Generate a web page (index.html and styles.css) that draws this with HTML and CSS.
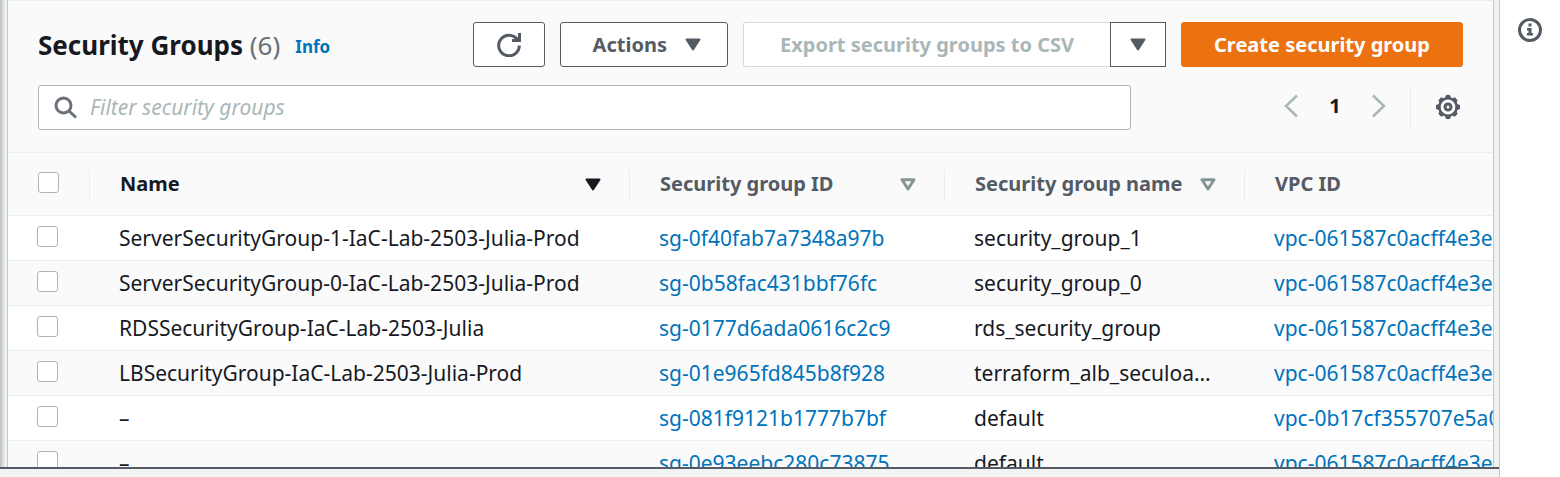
FILE: index.html
```html
<!DOCTYPE html>
<html lang="en">
<head>
<meta charset="utf-8">
<title>Security Groups</title>
<link rel="stylesheet" href="styles.css">
</head>
<body>
<div class="app">
  <div class="workspace">
    <main class="panel">
      <header class="toolbar">
        <div class="toolbar-row">
          <h1 class="title">Security Groups <span class="count">(6)</span></h1>
          <a class="info-link" href="#">Info</a>
          <div class="actions">
            <button class="btn btn-icon" type="button" aria-label="Refresh">
              <svg width="24" height="24" viewBox="0 0 24 24" fill="none" stroke="currentColor" stroke-width="3"><path d="M22.300 12.500A10.300 10.300 0 1 1 18.500 4.500L21 7"/><path d="M22.500 0v7.500H15"/><path d="M18 4.500h4v3h-4z" fill="currentColor" stroke="none"/></svg>
            </button>
            <button class="btn" type="button">Actions
              <svg class="caret" width="16" height="13" viewBox="0 0 16 13"><path d="M1.500 1.500h13L8 11.500z" fill="currentColor" stroke="currentColor" stroke-width="2" stroke-linejoin="round"/></svg>
            </button>
            <div class="btn-group">
              <button class="btn btn-export" type="button" disabled>Export security groups to CSV</button>
              <button class="btn btn-split" type="button" aria-label="Export options">
                <svg width="16" height="13" viewBox="0 0 16 13"><path d="M1.500 1.500h13L8 11.500z" fill="currentColor" stroke="currentColor" stroke-width="2" stroke-linejoin="round"/></svg>
              </button>
            </div>
            <button class="btn btn-primary" type="button">Create security group</button>
          </div>
        </div>
        <div class="toolbar-row">
          <label class="search">
            <svg width="24" height="24" viewBox="0 0 24 24" fill="none" stroke="currentColor" stroke-width="3"><circle cx="9.500" cy="9.500" r="7.500"/><path d="M14.500 14.500l7.500 7"/></svg>
            <input class="search-input" type="text" placeholder="Filter security groups" aria-label="Filter security groups">
          </label>
          <nav class="pager" aria-label="Pagination">
            <button class="pager-btn" type="button" aria-label="Previous page"><svg width="14" height="24" viewBox="0 0 14 24" fill="none" stroke="currentColor" stroke-width="2.500"><path d="M13 1.500L2 12l11 10.500"/></svg></button>
            <button class="pager-btn current" type="button">1</button>
            <button class="pager-btn" type="button" aria-label="Next page"><svg width="14" height="24" viewBox="0 0 14 24" fill="none" stroke="currentColor" stroke-width="2.500"><path d="M1 1.500L12 12 1 22.500"/></svg></button>
          </nav>
          <button class="settings" type="button" aria-label="Preferences">
            <svg width="24" height="24" viewBox="0 0 24 24"><g fill="none" stroke="currentColor"><circle cx="12" cy="12" r="8.700" stroke-width="2.600"/><circle cx="12" cy="12" r="3" stroke-width="3"/></g><path fill="currentColor" d="M9 3l1-3h4l1 3zM9 21l1 3h4l1-3zM3 9l-3 1v4l3 1zM21 9l3 1v4l-3 1zM4 8.500L2.300 5.200l2.900-2.900L8.500 4zM20 8.500l1.700-3.300-2.900-2.900L15.500 4zM4 15.500l-1.700 3.300 2.900 2.900L8.500 20zM20 15.500l1.700 3.300-2.900 2.900L15.500 20z"/></svg>
          </button>
        </div>
      </header>
      <table class="grid">
        <colgroup><col class="col-check"><col class="col-name"><col class="col-id"><col class="col-group"><col class="col-vpc"></colgroup>
        <thead>
          <tr>
            <th><input class="check" type="checkbox" aria-label="Select all"></th>
            <th class="sorted"><button class="sort" type="button">Name <svg width="16" height="13" viewBox="0 0 16 13"><path d="M1.500 1.500h13L8 11.500z" fill="currentColor" stroke="currentColor" stroke-width="2" stroke-linejoin="round"/></svg></button></th>
            <th><button class="sort" type="button">Security group ID <svg class="idle" width="16" height="13" viewBox="0 0 16 13"><path d="M2 1.700h12L8 11z" fill="none" stroke="currentColor" stroke-width="3" stroke-linejoin="round"/></svg></button></th>
            <th><button class="sort" type="button">Security group name <svg class="idle" width="16" height="13" viewBox="0 0 16 13"><path d="M2 1.700h12L8 11z" fill="none" stroke="currentColor" stroke-width="3" stroke-linejoin="round"/></svg></button></th>
            <th><button class="sort" type="button">VPC ID</button></th>
          </tr>
        </thead>
        <tbody>
          <tr><td><input class="check" type="checkbox" aria-label="Select sg-0f40fab7a7348a97b"></td><td>ServerSecurityGroup-1-IaC-Lab-2503-Julia-Prod</td><td><a href="#">sg-0f40fab7a7348a97b</a></td><td>security_group_1</td><td><a href="#">vpc-061587c0acff4e3e</a></td></tr>
          <tr><td><input class="check" type="checkbox" aria-label="Select sg-0b58fac431bbf76fc"></td><td>ServerSecurityGroup-0-IaC-Lab-2503-Julia-Prod</td><td><a href="#">sg-0b58fac431bbf76fc</a></td><td>security_group_0</td><td><a href="#">vpc-061587c0acff4e3e</a></td></tr>
          <tr><td><input class="check" type="checkbox" aria-label="Select sg-0177d6ada0616c2c9"></td><td>RDSSecurityGroup-IaC-Lab-2503-Julia</td><td><a href="#">sg-0177d6ada0616c2c9</a></td><td>rds_security_group</td><td><a href="#">vpc-061587c0acff4e3e</a></td></tr>
          <tr><td><input class="check" type="checkbox" aria-label="Select sg-01e965fd845b8f928"></td><td>LBSecurityGroup-IaC-Lab-2503-Julia-Prod</td><td><a href="#">sg-01e965fd845b8f928</a></td><td>terraform_alb_seculoa…</td><td><a href="#">vpc-061587c0acff4e3e</a></td></tr>
          <tr><td><input class="check" type="checkbox" aria-label="Select sg-081f9121b1777b7bf"></td><td>–</td><td><a href="#">sg-081f9121b1777b7bf</a></td><td>default</td><td><a href="#">vpc-0b17cf355707e5a0</a></td></tr>
          <tr><td><input class="check" type="checkbox" aria-label="Select sg-0e93eebc280c73875"></td><td>–</td><td><a href="#">sg-0e93eebc280c73875</a></td><td>default</td><td><a href="#">vpc-061587c0acff4e3e</a></td></tr>
        </tbody>
      </table>
    </main>
    <div class="split-panel"></div>
  </div>
  <aside class="help-rail">
    <button class="help" type="button" aria-label="Open help panel">
      <svg width="24" height="24" viewBox="0 0 24 24"><circle cx="12" cy="12" r="10.500" fill="none" stroke="currentColor" stroke-width="3"/><path d="M10.500 5.500h3v3h-3zM9 10h4.500v5H15v2.500H9V15h1.500v-2.500H9z" fill="currentColor"/></svg>
    </button>
  </aside>
</div>
</body>
</html>
```
FILE: styles.css
```css
* { box-sizing: border-box; }

body {
  margin: 0;
  font-family: "Noto Sans", "Open Sans", sans-serif;
  font-size: 20px;
  line-height: 28px;
  color: #16191f;
  background: #fff;
}

a { color: #0073bb; text-decoration: none; }
button { font: inherit; color: inherit; cursor: pointer; }
svg { display: block; flex: none; }

.app { display: flex; height: 100vh; overflow: hidden; }

.workspace {
  flex: 1;
  min-width: 0;
  display: flex;
  flex-direction: column;
  background: linear-gradient(90deg, #b8bfc2, #eff1f1 5px);
  border-right: 1px solid #c3c8c9;
}

.panel {
  flex: 1;
  min-height: 0;
  margin: 0 5px 0 7px;
  overflow: hidden;
  background: #fafafa;
  border: solid #c3c8c9;
  border-width: 0 1px;
  border-top: 1px solid #eaeded;
}

.toolbar {
  display: flex;
  flex-direction: column;
  gap: 18px;
  padding: 21px 30px 22px;
  border-bottom: 1px solid #eaeded;
}

.toolbar-row { display: flex; align-items: center; }

.title { margin: 0; font-size: 26px; font-weight: 700; line-height: 36px; white-space: nowrap; }
.count { font-weight: 400; color: #687078; }
.info-link { margin-left: 15px; padding-top: 4px; font-size: 17px; font-weight: 700; }

.actions { display: flex; gap: 15px; margin-left: auto; }

.btn {
  display: flex;
  align-items: center;
  height: 45px;
  padding: 0 32px;
  font-weight: 700;
  color: #545b64;
  background: #fff;
  border: 1px solid #545b64;
  border-radius: 3px;
  white-space: nowrap;
}
.btn-icon { padding: 0 23px; }
.caret { margin-left: 18px; margin-right: -6px; }
.btn-group { display: flex; }
.btn-export { padding: 0 36px; color: #aab7b8; border-color: #d5dbdb; border-right: 0; border-radius: 3px 0 0 3px; }
.btn-split { padding: 0 19px; border-radius: 0; }
.btn-primary { color: #fff; background: #ec7211; border-color: #ec7211; }

.search {
  flex: 1;
  display: flex;
  align-items: center;
  gap: 12px;
  height: 45px;
  padding: 0 15px;
  color: #687078;
  background: #fff;
  border: 1px solid #aab7b8;
  border-radius: 3px;
}
.search-input {
  flex: 1;
  min-width: 0;
  padding: 0 0 2px;
  font: inherit;
  font-size: 21px;
  color: #16191f;
  background: none;
  border: 0;
  outline: 0;
}
.search-input::placeholder { color: #aab7b8; font-style: italic; opacity: 1; }

.pager { display: flex; align-items: center; margin-left: 138px; padding-bottom: 3px; color: #aab7b8; }
.pager-btn { display: flex; justify-content: center; width: 44px; padding: 0; background: none; border: 0; }
.current { font-weight: 700; color: #16191f; }

.settings {
  display: flex;
  align-items: center;
  height: 45px;
  margin-left: 9px;
  padding: 0 3px 2px 25px;
  color: #545b64;
  background: none;
  border: 0;
  border-left: 1px solid #eaeded;
}

.grid { width: 100%; min-width: 1485px; table-layout: fixed; border-collapse: separate; border-spacing: 0; }
.col-check { width: 82px; }
.col-name { width: 540px; }
.col-id { width: 315px; }
.col-group { width: 300px; }

.grid th, .grid td { padding: 0 29px; text-align: left; white-space: nowrap; border-bottom: 1px solid #eaeded; }
.grid th {
  height: 63px;
  padding-left: 30px;
  color: #545b64;
  background: linear-gradient(#eaeded, #eaeded) right center / 1px 31px no-repeat;
}
.grid th:last-child { background: none; }
.grid td { height: 45px; font-size: 21px; }
.grid td:last-child { padding-right: 0; }
.grid tbody tr:nth-child(odd) { background: #fff; }
.grid th.sorted { color: #16191f; }

.sort {
  display: flex;
  align-items: center;
  justify-content: space-between;
  width: 100%;
  padding: 0;
  font-weight: 700;
  background: none;
  border: 0;
}
.idle { color: #879596; }

.check {
  display: block;
  appearance: none;
  width: 21px;
  height: 21px;
  margin: 0 0 4px;
  background: #fff;
  border: 1px solid #aab7b8;
  border-radius: 3px;
}

.split-panel { height: 10px; background: #f2f3f3; border-top: 2px solid #545b64; }

.help-rail { display: flex; justify-content: center; width: 60px; padding-top: 18px; }
.help { align-self: flex-start; padding: 0; color: #545b64; background: none; border: 0; }
```
